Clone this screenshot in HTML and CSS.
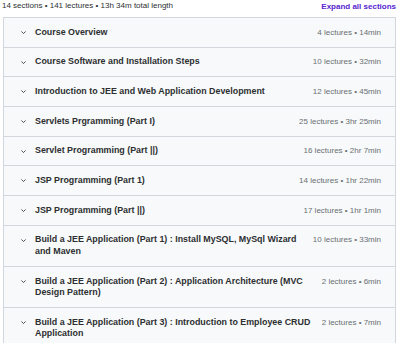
FILE: index.html
```html
<!DOCTYPE html>
<html>
<head>
<meta charset="utf-8">
<link rel="stylesheet" href="styles.css">
</head>
<body>
<div class="curriculum">
  <div class="summary">
    <span class="stats">14 sections • 141 lectures • 13h 34m total length</span>
    <button class="expand">Expand all sections</button>
  </div>
  <div class="sections">
    <div class="section"><span class="chev"><svg viewBox="0 0 10 10" width="7" height="7"><path d="M2 3.5 L5 6.5 L8 3.5" fill="none" stroke="#2d2f31" stroke-width="1.2"/></svg></span><span class="title">Course Overview</span><span class="meta">4 lectures • 14min</span></div>
    <div class="section"><span class="chev"><svg viewBox="0 0 10 10" width="7" height="7"><path d="M2 3.5 L5 6.5 L8 3.5" fill="none" stroke="#2d2f31" stroke-width="1.2"/></svg></span><span class="title">Course Software and Installation Steps</span><span class="meta">10 lectures • 32min</span></div>
    <div class="section"><span class="chev"><svg viewBox="0 0 10 10" width="7" height="7"><path d="M2 3.5 L5 6.5 L8 3.5" fill="none" stroke="#2d2f31" stroke-width="1.2"/></svg></span><span class="title">Introduction to JEE and Web Application Development</span><span class="meta">12 lectures • 45min</span></div>
    <div class="section"><span class="chev"><svg viewBox="0 0 10 10" width="7" height="7"><path d="M2 3.5 L5 6.5 L8 3.5" fill="none" stroke="#2d2f31" stroke-width="1.2"/></svg></span><span class="title">Servlets Prgramming (Part I)</span><span class="meta">25 lectures • 3hr 25min</span></div>
    <div class="section"><span class="chev"><svg viewBox="0 0 10 10" width="7" height="7"><path d="M2 3.5 L5 6.5 L8 3.5" fill="none" stroke="#2d2f31" stroke-width="1.2"/></svg></span><span class="title">Servlet Programming (Part ||)</span><span class="meta">16 lectures • 2hr 7min</span></div>
    <div class="section"><span class="chev"><svg viewBox="0 0 10 10" width="7" height="7"><path d="M2 3.5 L5 6.5 L8 3.5" fill="none" stroke="#2d2f31" stroke-width="1.2"/></svg></span><span class="title">JSP Programming (Part 1)</span><span class="meta">14 lectures • 1hr 22min</span></div>
    <div class="section"><span class="chev"><svg viewBox="0 0 10 10" width="7" height="7"><path d="M2 3.5 L5 6.5 L8 3.5" fill="none" stroke="#2d2f31" stroke-width="1.2"/></svg></span><span class="title">JSP Programming (Part ||)</span><span class="meta">17 lectures • 1hr 1min</span></div>
    <div class="section"><span class="chev"><svg viewBox="0 0 10 10" width="7" height="7"><path d="M2 3.5 L5 6.5 L8 3.5" fill="none" stroke="#2d2f31" stroke-width="1.2"/></svg></span><span class="title">Build a JEE Application (Part 1) : Install MySQL, MySql Wizard and Maven</span><span class="meta">10 lectures • 33min</span></div>
    <div class="section"><span class="chev"><svg viewBox="0 0 10 10" width="7" height="7"><path d="M2 3.5 L5 6.5 L8 3.5" fill="none" stroke="#2d2f31" stroke-width="1.2"/></svg></span><span class="title">Build a JEE Application (Part 2) : Application Architecture (MVC Design Pattern)</span><span class="meta">2 lectures • 6min</span></div>
    <div class="section"><span class="chev"><svg viewBox="0 0 10 10" width="7" height="7"><path d="M2 3.5 L5 6.5 L8 3.5" fill="none" stroke="#2d2f31" stroke-width="1.2"/></svg></span><span class="title">Build a JEE Application (Part 3) : Introduction to Employee CRUD Application</span><span class="meta">2 lectures • 7min</span></div>
  </div>
</div>
</body>
</html>
```
FILE: styles.css
```css
html, body {
  margin: 0;
  padding: 0;
  background: #ffffff;
}
body {
  font-family: "Liberation Sans", Arial, sans-serif;
  color: #2d2f31;
}
.curriculum {
  width: 393px;
  margin-left: 3px;
}
.summary {
  display: flex;
  justify-content: space-between;
  align-items: center;
  height: 17px;
}
.stats {
  font-size: 8px;
  color: #2d2f31;
  margin-left: -1px;
  margin-top: -6px;
}
.expand {
  background: none;
  border: none;
  padding: 0;
  font-family: inherit;
  font-weight: 700;
  font-size: 8px;
  color: #5624d0;
  margin-top: -4px;
}
.sections {
  border: 1px solid #d1d7dc;
  border-bottom: none;
}
.section {
  display: flex;
  align-items: flex-start;
  background: #f7f9fa;
  border-bottom: 1px solid #d1d7dc;
  padding: 8.6px 14px 8.6px 16px;
  line-height: 11.5px;
}
.chev {
  width: 15px;
  flex: none;
  display: flex;
  align-items: center;
  height: 11.5px;
}
.title {
  flex: 1;
  font-weight: 700;
  font-size: 8.9px;
  color: #2d2f31;
}
.meta {
  flex: none;
  margin-left: 8px;
  font-size: 8px;
  color: #6a6f73;
}
```
